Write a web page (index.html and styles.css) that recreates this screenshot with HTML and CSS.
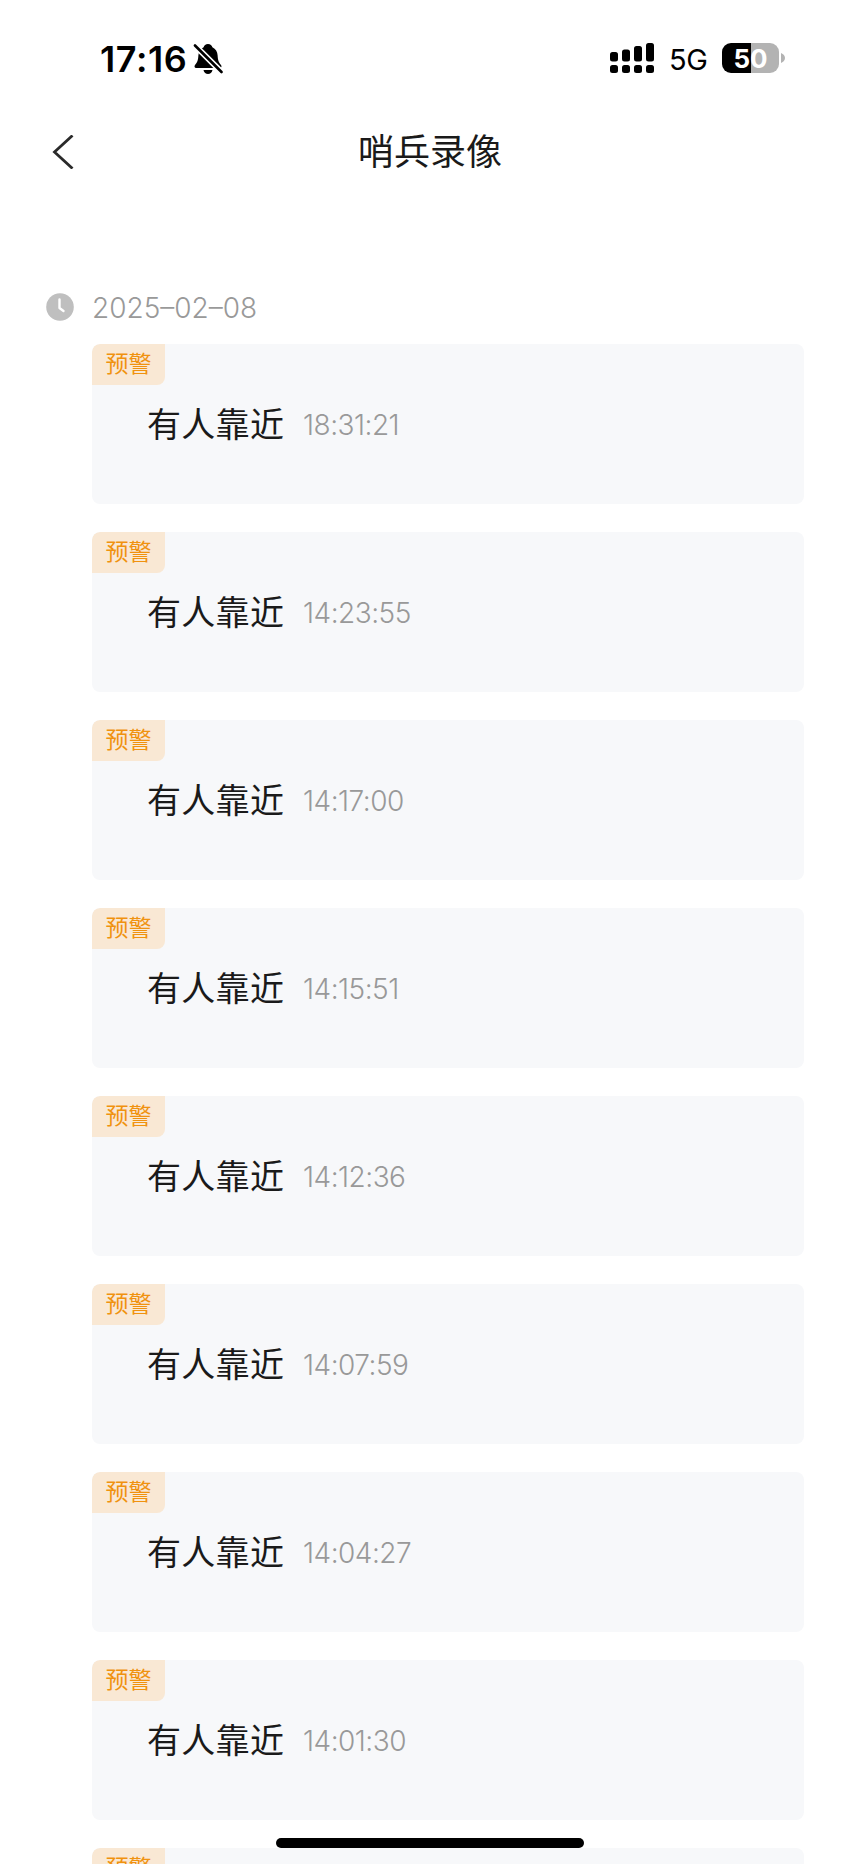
FILE: index.html
```html
<!DOCTYPE html>
<html lang="zh-CN">
<head>
<meta charset="UTF-8">
<meta name="viewport" content="width=device-width, initial-scale=1.0">
<title>哨兵录像</title>
<link rel="stylesheet" href="styles.css">
</head>
<body>
<div class="page">
<div class="status-bar">
<span class="clock">17:16</span>
<svg class="bell" width="30" height="32" viewBox="0 0 30 32">
<path d="M15 1c2.300 0 4 1.500 4.400 3.300 3.300 1.500 5 4.500 5.200 8 .3 5.200 1 6.800 3.400 9.700.9 1.200.6 3-1.200 3H3.200c-1.800 0-2.100-1.800-1.200-3 2.400-2.900 3.100-4.500 3.400-9.700.2-3.500 1.900-6.500 5.200-8C11 2.500 12.700 1 15 1z"/>
<path d="M10.500 27h9c-.5 2.600-2.300 4-4.500 4s-4-1.400-4.500-4z"/>
<path class="bell-gap" d="M2 2.500L28.500 29"/>
<path class="bell-slash" d="M2 2.500L28.500 29"/>
</svg>
<svg class="signal" width="44" height="31" viewBox="0 0 44 31">
<rect x="0" y="9" width="8" height="9.500" rx="2.500"/>
<rect x="12" y="6.500" width="8" height="12" rx="2.500"/>
<rect x="24" y="3" width="8" height="15.500" rx="2.500"/>
<rect x="36" y="0" width="8" height="18.500" rx="2.500"/>
<rect x="0" y="22" width="8" height="8" rx="2.500"/>
<rect x="12" y="22" width="8" height="8" rx="2.500"/>
<rect x="24" y="22" width="8" height="8" rx="2.500"/>
<rect x="36" y="22" width="8" height="8" rx="2.500"/>
</svg>
<span class="network">5G</span>
<div class="battery">50</div>
<svg class="battery-cap" width="4" height="10" viewBox="0 0 4 10"><path d="M0 0c2.500 1 4 2.800 4 5s-1.500 4-4 5z"/></svg>
</div>
<div class="nav">
<svg class="back" width="22" height="34" viewBox="0 0 22 34"><path d="M20.500 .5L2.500 17l18 16.500"/></svg>
<h1>哨兵录像</h1>
</div>
<div class="date-row">
<svg class="date-icon" width="28" height="28" viewBox="0 0 28 28">
<circle cx="14" cy="14" r="13.800"/>
<path d="M13.500 6.500v8.500l4 3"/>
</svg>
<span class="date">2025–02–08</span>
</div>
<div class="list">
<div class="card"><span class="tag">预警</span><div class="event"><span class="name">有人靠近</span><span class="time">18:31:21</span></div></div>
<div class="card"><span class="tag">预警</span><div class="event"><span class="name">有人靠近</span><span class="time">14:23:55</span></div></div>
<div class="card"><span class="tag">预警</span><div class="event"><span class="name">有人靠近</span><span class="time">14:17:00</span></div></div>
<div class="card"><span class="tag">预警</span><div class="event"><span class="name">有人靠近</span><span class="time">14:15:51</span></div></div>
<div class="card"><span class="tag">预警</span><div class="event"><span class="name">有人靠近</span><span class="time">14:12:36</span></div></div>
<div class="card"><span class="tag">预警</span><div class="event"><span class="name">有人靠近</span><span class="time">14:07:59</span></div></div>
<div class="card"><span class="tag">预警</span><div class="event"><span class="name">有人靠近</span><span class="time">14:04:27</span></div></div>
<div class="card"><span class="tag">预警</span><div class="event"><span class="name">有人靠近</span><span class="time">14:01:30</span></div></div>
<div class="card"><span class="tag">预警</span></div>
</div>
<div class="home-indicator"></div>
</div>
</body>
</html>
```
FILE: styles.css
```css
* {
box-sizing: border-box;
}
body {
margin: 0;
background: #fff;
font-family: Inter, "Noto Sans CJK SC", sans-serif;
}
svg {
display: block;
flex: none;
}
.page {
position: relative;
width: 860px;
height: 1864px;
overflow: hidden;
}
.status-bar {
display: flex;
align-items: center;
height: 116px;
padding: 0 75px 0 100px;
}
.clock {
width: 93px;
padding-top: 2px;
font-size: 36px;
font-weight: 600;
letter-spacing: 0.6px;
white-space: nowrap;
}
.bell {
margin-top: 2px;
}
.bell-gap {
stroke: #fff;
stroke-width: 6;
}
.bell-slash {
stroke: #000;
stroke-width: 2.6;
stroke-linecap: round;
}
.signal {
margin-left: auto;
}
.network {
width: 38px;
margin: 2px 15px 0 15px;
font-size: 29px;
letter-spacing: -0.5px;
white-space: nowrap;
}
.battery {
width: 57px;
height: 30px;
margin-right: 2px;
border-radius: 9px;
background: linear-gradient(to right, #000 29px, #b3b3b3 29px);
color: #fff;
font-size: 26px;
font-weight: 700;
line-height: 31px;
text-align: center;
}
.battery-cap {
fill: #b3b3b3;
}
.nav {
display: grid;
grid-template-columns: 60px 1fr 60px;
align-items: center;
height: 72px;
padding: 0 52px;
}
.back path {
fill: none;
stroke: #2a2a2a;
stroke-width: 2.8;
}
.nav h1 {
margin: 0;
color: #1a1a1a;
font-size: 36px;
font-weight: 400;
line-height: 72px;
text-align: center;
}
.date-row {
display: flex;
align-items: center;
height: 40px;
margin-top: 99px;
padding-left: 46px;
}
.date-icon {
fill: #bfbfbf;
}
.date-icon path {
fill: none;
stroke: #fff;
stroke-width: 2.4;
stroke-linecap: round;
stroke-linejoin: round;
}
.date {
margin-left: 18px;
padding-top: 2px;
color: #999;
font-size: 28px;
font-weight: 300;
}
.list {
display: flex;
flex-direction: column;
gap: 28px;
margin-top: 17px;
padding: 0 56px 0 92px;
}
.card {
flex: none;
height: 160px;
border-radius: 8px;
background: #f7f8fa;
overflow: hidden;
}
.tag {
display: block;
width: 73px;
height: 41px;
border-radius: 8px 0 8px 0;
background: #f9e8d4;
color: #f0920f;
font-size: 23px;
line-height: 41px;
text-align: center;
}
.event {
display: flex;
align-items: center;
height: 80px;
padding-left: 55px;
}
.name {
width: 156px;
padding-bottom: 5px;
color: #1a1a1a;
font-size: 34px;
letter-spacing: 0.3px;
}
.time {
color: #999;
font-size: 28px;
font-weight: 300;
letter-spacing: -0.5px;
}
/* iOS home bar floats over the list */
.home-indicator {
position: absolute;
left: 276px;
bottom: 16px;
width: 308px;
height: 10px;
border-radius: 5px;
background: #000;
}
```
